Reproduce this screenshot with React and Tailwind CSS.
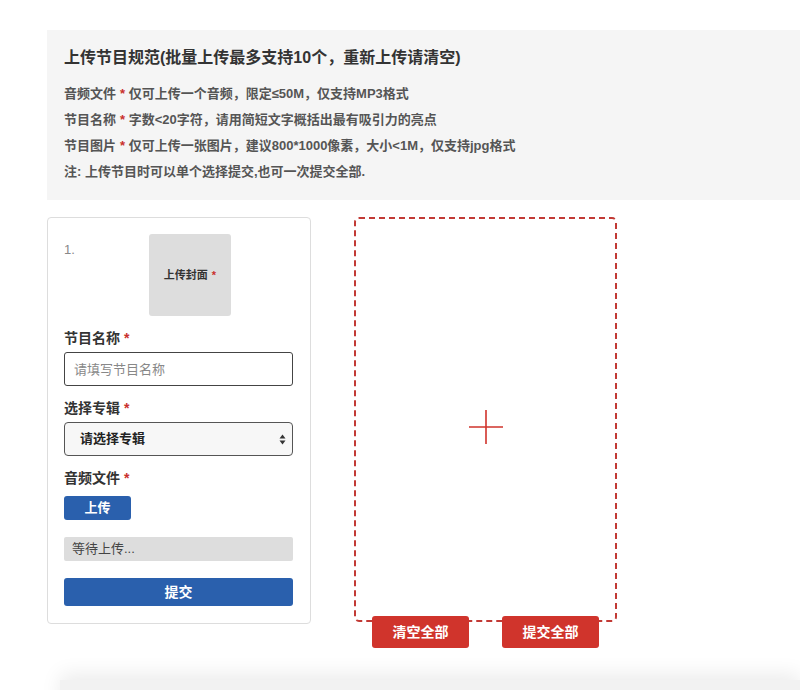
import React from 'react';

const font = { fontFamily: '"Liberation Sans", "Noto Sans CJK SC", sans-serif' };

function Star() {
  return <span className="text-[#c9302c] ml-1">*</span>;
}

export default function App() {
  return (
    <div className="w-[800px] h-[690px] bg-white overflow-hidden relative" style={font}>
      {/* Rules */}
      <div className="ml-[47px] mt-[30px] bg-[#f5f5f5] pl-[17px] pt-[16px] pb-[17px] h-[170px]">
        <h2 className="text-[16px] font-bold text-[#333] leading-[24px]">上传节目规范(批量上传最多支持10个，重新上传请清空)</h2>
        <div className="mt-[11px] text-[13px] font-semibold text-[#555] leading-[26px]">
          <p>音频文件<Star /> 仅可上传一个音频，限定≤50M，仅支持MP3格式</p>
          <p>节目名称<Star /> 字数&lt;20字符，请用简短文字概括出最有吸引力的亮点</p>
          <p>节目图片<Star /> 仅可上传一张图片，建议800*1000像素，大小&lt;1M，仅支持jpg格式</p>
          <p>注: 上传节目时可以单个选择提交,也可一次提交全部.</p>
        </div>
      </div>

      <div className="flex mt-[17px] ml-[47px] gap-[43px]">
        {/* Item card */}
        <div className="w-[264px] h-[407px] border border-[#ddd] rounded-[4px] px-[16px] pt-[16px]">
          <div className="flex">
            <span className="text-[13px] text-[#888] mt-[6px] w-[20px]">1.</span>
            <div className="ml-[65px] w-[82px] h-[82px] bg-[#ddd] rounded-[3px] flex items-center justify-center text-[11px] font-bold text-[#333]">
              上传封面<Star />
            </div>
          </div>
          <div className="mt-[12px] text-[14px] font-bold text-[#333] leading-[20px]">节目名称<Star /></div>
          <input
            className="mt-[4px] w-[229px] h-[34px] border border-[#444] rounded-[3px] px-[9px] text-[13px] outline-none placeholder:text-[#888]"
            placeholder="请填写节目名称"
          />
          <div className="mt-[12px] text-[14px] font-bold text-[#333] leading-[20px]">选择专辑<Star /></div>
          <div className="mt-[4px] w-[229px] h-[34px] border border-[#555] rounded-[4px] bg-[#f7f7f7] flex items-center justify-between pl-[15px] pr-[6px]">
            <span className="text-[13px] font-bold text-[#222]">请选择专辑</span>
            <svg width="7" height="11" viewBox="0 0 7 11">
              <path d="M3.5 0.5 L6.5 4.5 L0.5 4.5 Z" fill="#333" />
              <path d="M3.5 10.5 L6.5 6.5 L0.5 6.5 Z" fill="#333" />
            </svg>
          </div>
          <div className="mt-[12px] text-[14px] font-bold text-[#333] leading-[20px]">音频文件<Star /></div>
          <button className="mt-[8px] w-[67px] h-[24px] bg-[#2a60ad] rounded-[3px] text-white text-[13px] font-bold flex items-center justify-center">
            上传
          </button>
          <div className="mt-[17px] w-[229px] h-[24px] bg-[#ddd] rounded-[2px] px-[8px] text-[13px] text-[#444] flex items-center">
            等待上传...
          </div>
          <button className="mt-[17px] w-[229px] h-[28px] bg-[#2a60ad] rounded-[3px] text-white text-[14px] font-bold flex items-center justify-center">
            提交
          </button>
        </div>

        {/* Add new */}
        <div className="relative">
          <div className="w-[263px] h-[405px] border-2 border-dashed border-[#c23a35] rounded-[5px] flex items-center justify-center pt-[14px]">
            <svg width="34" height="34" viewBox="0 0 34 34">
              <path d="M17 0 V34 M0 17 H34" stroke="#d0342c" strokeWidth="1.6" />
            </svg>
          </div>
          <div className="absolute left-[18px] top-[399px] flex gap-[33px]">
            <button className="w-[97px] h-[32px] bg-[#d0342c] rounded-[3px] text-white text-[14px] font-bold">清空全部</button>
            <button className="w-[97px] h-[32px] bg-[#d0342c] rounded-[3px] text-white text-[14px] font-bold">提交全部</button>
          </div>
        </div>
      </div>

      {/* Next section edge */}
      <div className="absolute left-[60px] right-0 top-[680px] h-[40px] bg-[#f2f2f2] shadow-[0_-6px_20px_rgba(0,0,0,0.08)]" />
    </div>
  );
}
